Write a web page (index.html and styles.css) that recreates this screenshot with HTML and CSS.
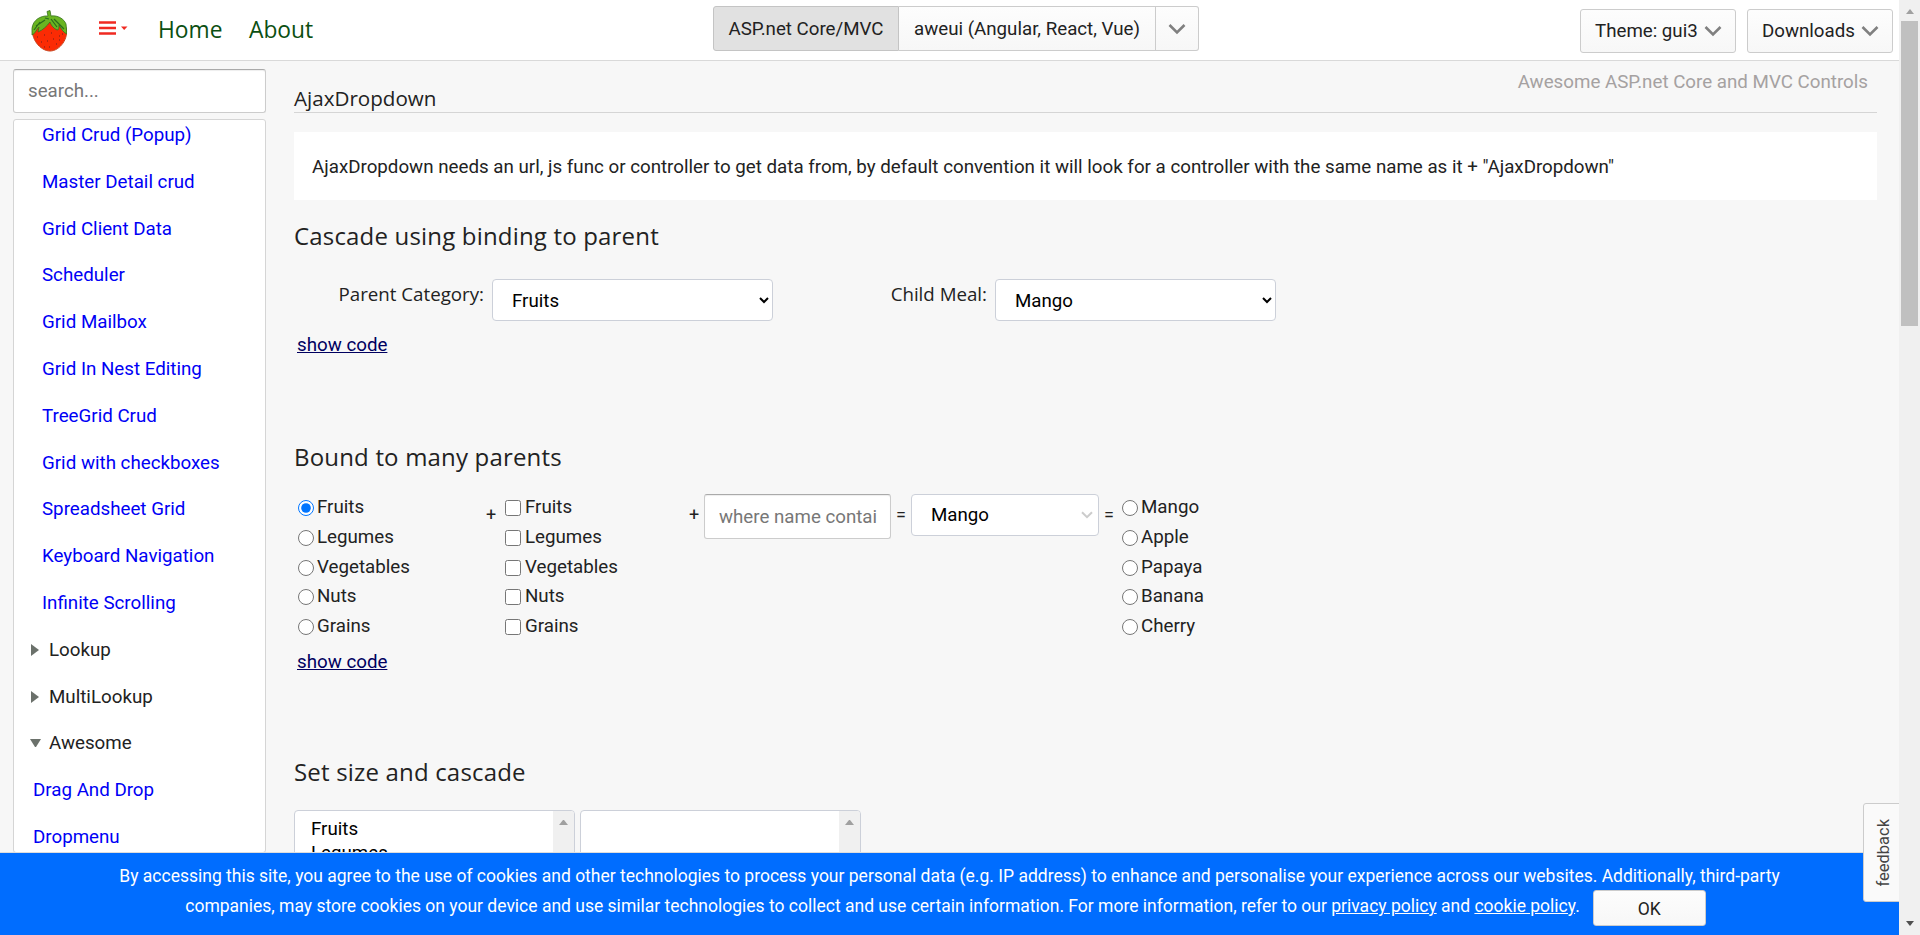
FILE: index.html
```html
<!DOCTYPE html>
<html lang="en">
<head>
<meta charset="utf-8">
<title>AjaxDropdown</title>
<link rel="stylesheet" href="styles.css">
</head>
<body>
<div class="window">
  <div class="page">
    <header class="header">
      <svg class="logo" width="36" height="42" viewBox="0 0 36 42">
        <path d="M2 17C-1 28 9 41 19 41C29 41 38 28 35 18C33 9 25 8 18 9C9 8 4 11 2 17Z" fill="#fb2b04" stroke="#c8421c"/>
        <path d="M1 22C0 12 7 7 14 6L17 6L16 1.500L19 .5L20 6C27 5 33 9 35 14L36 24C33 23 30 19 28 15C28 18 28 20 26 20C22 18 20 15 19 12C16 16 12 20 7 22L8 17C5 20 4 24 1 25Z" fill="#69b521" stroke="#37721f" stroke-width=".8"/>
        <path d="M5 16L14 10M3 20L9 12M20 9L26 17M23 9L33 19M14 8L18 9" stroke="#2b6b1c" stroke-width="1.200" fill="none"/>
        <path d="M6 27h1M10 32h1M13 25h1M16 31h1M18 37h1M20 23h1M22 29h1M25 34h1M28 26h1M31 24h1M13 37h1M28 30h1" stroke="#9c2416" stroke-width="1.500"/>
      </svg>
      <svg class="burger" width="29" height="14" viewBox="0 0 29 14"><path d="M0 1.500H17M0 7H17M0 12.500H17" stroke="#f02a22" stroke-width="2.600"/><path d="M22 5.500H28.500L25.200 9Z" fill="#f02a22"/></svg>
      <a class="nav home">Home</a>
      <a class="nav">About</a>
      <div class="group">
        <button class="btn active">ASP.net Core/MVC</button><button class="btn mid">aweui (Angular, React, Vue)</button><button class="btn last"><svg class="chev" width="18" height="12" viewBox="0 0 18 12"><path d="M1.500 2L9 9.500L16.500 2"/></svg></button>
      </div>
      <div class="tools">
        <button class="btn theme">Theme: gui3<svg class="chev" width="18" height="12" viewBox="0 0 18 12"><path d="M1.500 2L9 9.500L16.500 2"/></svg></button>
        <button class="btn downloads">Downloads<svg class="chev" width="18" height="12" viewBox="0 0 18 12"><path d="M1.500 2L9 9.500L16.500 2"/></svg></button>
      </div>
    </header>
    <div class="body">
      <aside class="side">
        <input class="field search" placeholder="search...">
        <nav class="menu">
          <a>Grid Crud (Popup)</a><a>Master Detail crud</a><a>Grid Client Data</a><a>Scheduler</a><a>Grid Mailbox</a><a>Grid In Nest Editing</a><a>TreeGrid Crud</a><a>Grid with checkboxes</a><a>Spreadsheet Grid</a><a>Keyboard Navigation</a><a>Infinite Scrolling</a>
          <div class="node"><i class="closed"></i>Lookup</div>
          <div class="node"><i class="closed"></i>MultiLookup</div>
          <div class="node"><i class="opened"></i>Awesome</div>
          <a class="outer">Drag And Drop</a><a class="outer">Dropmenu</a>
        </nav>
      </aside>
      <main class="main">
        <div class="tagline">Awesome ASP.net Core and MVC Controls</div>
        <h1>AjaxDropdown</h1>
        <div class="info">AjaxDropdown needs an url, js func or controller to get data from, by default convention it will look for a controller with the same name as it + "AjaxDropdown"</div>
        <section class="cascade">
          <h2>Cascade using binding to parent</h2>
          <div class="row">
            <label class="lbl first">Parent Category:</label><select class="select"><option>Fruits</option></select>
            <label class="lbl second">Child Meal:</label><select class="select"><option>Mango</option></select>
          </div>
          <a class="code">show code</a>
        </section>
        <section class="bound">
          <h2>Bound to many parents</h2>
          <div class="row">
            <div class="list radios">
              <label><input type="radio" name="p" checked>Fruits</label><label><input type="radio" name="p">Legumes</label><label><input type="radio" name="p">Vegetables</label><label><input type="radio" name="p">Nuts</label><label><input type="radio" name="p">Grains</label>
            </div>
            <span class="op plus1">+</span>
            <div class="list checks">
              <label><input type="checkbox">Fruits</label><label><input type="checkbox">Legumes</label><label><input type="checkbox">Vegetables</label><label><input type="checkbox">Nuts</label><label><input type="checkbox">Grains</label>
            </div>
            <span class="op plus2">+</span>
            <input class="field where" placeholder="where name contains">
            <span class="op eq">=</span>
            <div class="select combo"><span>Mango</span><svg width="12" height="8" viewBox="0 0 12 8"><path d="M1 1.200L6 6.200L11 1.200" fill="none" stroke="#ccc" stroke-width="2"/></svg></div>
            <span class="op eq">=</span>
            <div class="list result">
              <label><input type="radio" name="r">Mango</label><label><input type="radio" name="r">Apple</label><label><input type="radio" name="r">Papaya</label><label><input type="radio" name="r">Banana</label><label><input type="radio" name="r">Cherry</label>
            </div>
          </div>
          <a class="code">show code</a>
        </section>
        <section class="sizes">
          <h2>Set size and cascade</h2>
          <div class="row boxes">
            <div class="listbox"><div class="opts"><div>Fruits</div><div>Legumes</div></div><div class="track"><i></i></div></div>
            <div class="listbox"><div class="opts"></div><div class="track"><i></i></div></div>
          </div>
        </section>
      </main>
    </div>
    <div class="cookies">
      <div>By accessing this site, you agree to the use of cookies and other technologies to process your personal data (e.g. IP address) to enhance and personalise your experience across our websites. Additionally, third-party</div>
      <div class="line2"><span>companies, may store cookies on your device and use similar technologies to collect and use certain information. For more information, refer to our <u>privacy policy</u> and <u>cookie policy</u>.</span><button class="btn ok">OK</button></div>
    </div>
    <div class="feedback"><span>feedback</span></div>
  </div>
  <div class="scroll"><i class="up"></i><div class="thumb"></div><i class="down"></i></div>
</div>
</body>
</html>
```
FILE: styles.css
```css
* { box-sizing: border-box; }
body { margin: 0; font: 18.740px/30px Roboto, sans-serif; color: #222; background: #f7f7f7; overflow: hidden; }
.window { display: flex; height: 935px; overflow: hidden; }
.page { position: relative; width: 1899px; height: 935px; overflow: hidden; }
.header { display: flex; align-items: flex-start; height: 61px; background: #fff; border-bottom: 1px solid #d9d9d9; }
.logo { margin: 10px 0 0 31px; }
.burger { margin: 21px 0 0 32px; }
.nav { width: 66px; font: 22.800px/32px "Open Sans", sans-serif; color: #0b4f12; margin: 14px 0 0 27px; }
.nav.home { width: 64px; margin-left: 30px; }
.group { display: flex; width: 486px; margin: 6px 0 0 398px; }
.btn { font: 18.720px/20px Roboto, sans-serif; color: #222; border: 1px solid #ccc; border-radius: 3px; background: linear-gradient(#fdfdfd, #f7f7f7); padding: 1px 0 0; height: 45px; display: flex; align-items: center; justify-content: center; white-space: nowrap; }
.btn.active { width: 186px; background: #e1e1e1; border-color: #c4c4c4; border-radius: 3px 0 0 3px; }
.btn.mid { width: 257px; border-left: 0; border-radius: 0; }
.btn.last { width: 43px; border-left: 0; border-radius: 0 3px 3px 0; }
.chev path { fill: none; stroke: #808080; stroke-width: 2.6; }
.tools { display: flex; gap: 11px; margin: 9px 6px 0 auto; }
.tools .btn { height: 44px; justify-content: space-between; padding: 0 13px 0 14px; }
.theme { width: 156px; }
.downloads { width: 146px; }
.body { display: flex; }
.side { width: 253px; margin-left: 13px; padding-top: 8px; }
.field { font: 18.720px/20px Roboto, sans-serif; border: 1px solid #ccc; border-top-color: #aaa; border-radius: 3px; padding: 0 13px 1px 14px; height: 44px; background: #fff; display: block; box-shadow: inset 0 1px 1px #eee; outline: 0; }
.field::placeholder { color: #777; }
.search { width: 253px; }
.menu { height: 734px; margin-top: 6px; background: #fff; border: 1px solid #d5d5d5; border-radius: 3px; padding-left: 28px; overflow: hidden; }
.menu a, .node { display: block; height: 46.800px; line-height: 30px; color: #0000f5; white-space: nowrap; }
.menu .outer { margin-left: -9px; }
.node { display: flex; align-items: flex-start; margin-left: -11px; color: #222; }
.node i { border: solid transparent; }
.node .closed { width: 8px; height: 12px; margin: 9px 10px 0 0; border-width: 6px 0 6px 8px; border-left-color: #6b716b; }
.node .opened { width: 11px; height: 8px; margin: 11px 8px 0 -1px; border-width: 8px 5.500px 0; border-top-color: #6b716b; }
.main { width: 1583px; margin-left: 28px; padding-top: 6px; }
.tagline { text-align: right; color: #a5a1a1; padding-right: 9px; height: 17px; }
h1 { margin: 0; height: 29px; font: 20.600px/29px "Open Sans", sans-serif; border-bottom: 1px solid #d5d5d5; }
.info { height: 68px; margin-top: 19px; padding: 0 18px; line-height: 70px; background: #fff; white-space: nowrap; }
h2 { margin: 0; font: 24px/32px "Open Sans", sans-serif; letter-spacing: .18px; }
.row { display: flex; align-items: flex-start; }
.cascade { height: 220px; padding-top: 20px; }
.cascade .row { height: 51px; margin-top: 27px; }
.lbl { font: 18.720px/30px "Open Sans", sans-serif; text-align: right; padding-right: 8px; white-space: nowrap; }
.lbl.first { width: 198px; }
.lbl.second { width: 222px; }
.select { width: 281px; height: 42px; font: 18.720px/20px Roboto, sans-serif; color: #000; border: 1px solid #ccd0d9; border-radius: 4px; background: #fff; padding: 1px 0 0 15px; }
.code { margin-left: 3px; color: #00005f; text-decoration: underline; display: inline-block; }
.bound { height: 315px; padding-top: 21px; }
.bound .row { margin-top: 18px; height: 156px; }
.list { line-height: 32px; }
.list label { display: flex; height: 29.750px; }
.list input { width: 16px; height: 16px; margin: 9px 3px 0 0; }
.radios { width: 189px; padding-left: 4px; }
.checks { width: 180px; }
.checks input { margin-right: 4px; }
.op { margin-top: 9px; font-size: 18px; }
.plus1 { width: 22px; padding-left: 3px; }
.plus2 { width: 19px; padding-left: 4px; }
.where { width: 187px; height: 45px; margin-top: 3px; padding: 0 13px 0 14px; }
.eq { width: 20px; text-align: center; }
.combo { width: 188px; margin-top: 3px; display: flex; align-items: center; justify-content: space-between; padding: 0 5px 0 19px; }
.result { margin-left: 3px; }
.sizes { padding-top: 21px; }
.boxes { margin-top: 22px; gap: 5px; }
.listbox { display: flex; width: 281px; height: 120px; border: 1px solid #ccd0d9; border-radius: 4px; background: #fff; color: #000; overflow: hidden; }
.opts { flex: 1; padding: 6px 0 0 16px; line-height: 24px; }
.track { width: 21px; background: #f0f0f0; }
.track i { display: block; margin: 9px 0 0 6px; width: 9px; border: solid transparent; border-width: 0 4.500px 5px; border-bottom-color: #a0a0a0; }
.cookies { position: absolute; left: 0; bottom: 0; width: 1899px; height: 83px; border-top: 1px solid #ddd; background: #006dff; color: #fff; font-size: 17.500px; padding-top: 8px; text-align: center; white-space: nowrap; }
.line2 { display: flex; justify-content: center; gap: 13px; padding-right: 8px; }
.ok { width: 113px; height: 36px; margin-top: -1px; font-size: 17.500px; }
.feedback { position: absolute; left: 1863px; top: 803px; width: 37px; height: 99px; border: 1px solid #ccc; border-radius: 3px 0 0 3px; background: #fafafa; display: flex; align-items: center; justify-content: center; color: #444; font-size: 16.500px; padding-left: 4px; }
.feedback span { writing-mode: vertical-rl; transform: rotate(180deg); }
.scroll { width: 21px; height: 935px; background: #f0f0f0; display: flex; flex-direction: column; align-items: center; }
.thumb { width: 17px; height: 305px; margin: 7px 0 auto; background: #c0c0c0; }
.up { margin-top: 9px; border: solid transparent; border-width: 0 4.500px 5px; border-bottom-color: #a0a0a0; }
.down { margin-bottom: 9px; border: solid transparent; border-width: 5px 4.500px 0; border-top-color: #505050; }
```
